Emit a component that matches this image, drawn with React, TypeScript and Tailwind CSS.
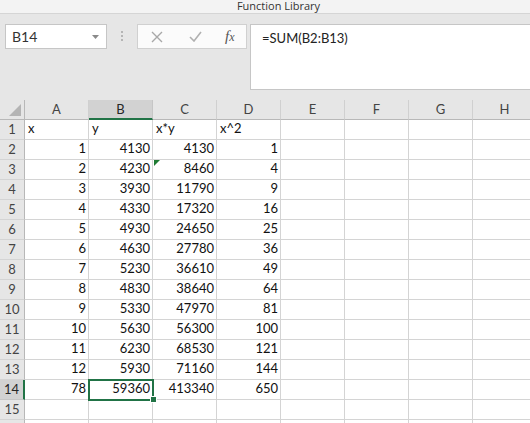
import React from 'react';

const cols = ['A', 'B', 'C', 'D', 'E', 'F', 'G', 'H'];

const rows: (string | number)[][] = [
  ['x', 'y', 'x*y', 'x^2'],
  [1, 4130, 4130, 1],
  [2, 4230, 8460, 4],
  [3, 3930, 11790, 9],
  [4, 4330, 17320, 16],
  [5, 4930, 24650, 25],
  [6, 4630, 27780, 36],
  [7, 5230, 36610, 49],
  [8, 4830, 38640, 64],
  [9, 5330, 47970, 81],
  [10, 5630, 56300, 100],
  [11, 6230, 68530, 121],
  [12, 5930, 71160, 144],
  [78, 59360, 413340, 650],
  [],
  [],
];

function FormulaBar() {
  return (
    <div className="flex h-[86px] items-start pt-[10px]">
      {/* name box */}
      <div className="ml-[5px] flex h-[25px] w-[102px] items-center justify-between border border-[#c6c6c6] bg-white pl-[6px] pr-[7px] text-[14px] text-[#333]">
        <span>B14</span>
        <svg width="7" height="4" viewBox="0 0 7 4">
          <polygon points="0,0 7,0 3.5,4" fill="#8a8a8a" />
        </svg>
      </div>
      <div className="flex w-[30px] flex-col items-center gap-[2px] pt-[7px]">
        <span className="h-[2px] w-[2px] bg-[#b5b5b5]" />
        <span className="h-[2px] w-[2px] bg-[#b5b5b5]" />
        <span className="h-[2px] w-[2px] bg-[#b5b5b5]" />
      </div>
      {/* cancel / enter / fx */}
      <div className="flex h-[25px] w-[110px] items-center border border-[#d0d0d0] bg-[#fbfbfb]">
        <svg className="ml-[13px]" width="12" height="12" viewBox="0 0 12 12">
          <path d="M1 1 L11 11 M11 1 L1 11" stroke="#a8a8a8" strokeWidth="1.4" />
        </svg>
        <svg className="ml-[26px]" width="13" height="11" viewBox="0 0 13 11">
          <path d="M1 6 L5 10 L12 1" stroke="#b0b0b0" strokeWidth="1.6" fill="none" />
        </svg>
        <span className="ml-[23px] font-['Liberation_Serif',serif] text-[15px] italic text-[#555]">
          f<span className="text-[12px]">x</span>
        </span>
      </div>
      {/* formula input */}
      <div className="ml-[3px] h-[66px] flex-1 border border-r-0 border-[#c6c6c6] bg-white pl-[11px] pt-[4px] text-[13px] text-[#222]">
        =SUM(B2:B13)
      </div>
    </div>
  );
}

function Sheet() {
  return (
    <div className="relative">
      <div className="grid grid-cols-[25px_repeat(8,64px)] grid-rows-[20px]">
        {/* corner */}
        <div className="relative border-b border-r border-[#b8b8b8] bg-[#e6e6e6]">
          <svg className="absolute bottom-[3px] right-[3px]" width="12" height="12" viewBox="0 0 12 12">
            <polygon points="12,0 12,12 0,12" fill="#b4b4b4" />
          </svg>
        </div>
        {cols.map((c) => (
          <div
            key={c}
            className={
              c === 'B'
                ? 'flex items-center justify-center border-b-2 border-r border-b-[#217346] border-r-[#c6c6c6] bg-[#d2d2d2] pt-[2px] text-[#262626]'
                : 'flex items-center justify-center border-b border-r border-b-[#b8b8b8] border-r-[#d0d0d0] bg-[#e6e6e6] pt-[1px] text-[#444]'
            }
          >
            {c}
          </div>
        ))}
        {rows.map((r, i) => {
          const n = i + 1;
          return (
            <React.Fragment key={n}>
              <div
                className={
                  n === 14
                    ? 'flex h-[20px] items-center justify-center border-b border-r-2 border-b-[#c6c6c6] border-r-[#217346] bg-[#d2d2d2] text-[#262626]'
                    : 'flex h-[20px] items-center justify-center border-b border-r border-b-[#d4d4d4] border-r-[#b8b8b8] bg-[#e6e6e6] text-[#444]'
                }
              >
                {n < 16 ? n : ''}
              </div>
              {cols.map((c, j) => {
                const v = r[j];
                const isNum = typeof v === 'number';
                return (
                  <div
                    key={c}
                    className={
                      isNum
                        ? 'flex h-[20px] items-end justify-end border-b border-r border-[#d4d4d4] bg-white pb-[1px] pr-[2px] text-[#111]'
                        : 'flex h-[20px] items-end justify-start border-b border-r border-[#d4d4d4] bg-white pb-[1px] pl-[3px] text-[#111]'
                    }
                  >
                    {v ?? ''}
                  </div>
                );
              })}
            </React.Fragment>
          );
        })}
      </div>
      {/* error indicator on C3 */}
      <svg className="absolute left-[154px] top-[60px]" width="6" height="6" viewBox="0 0 6 6">
        <polygon points="0,0 6,0 0,6" fill="#1e7b34" />
      </svg>
      {/* active cell B14 */}
      <div className="absolute left-[88px] top-[279px] h-[22px] w-[66px] border-2 border-[#217346]" />
      <div className="absolute left-[150px] top-[296px] h-[7px] w-[7px] border border-white bg-[#217346]" />
    </div>
  );
}

export default function App() {
  return (
    <div className="h-[423px] w-[530px] overflow-hidden bg-[#e6e6e6] font-['Lato',sans-serif] text-[13px]">
      <div className="flex h-[14px] items-end justify-center border-b border-[#d5d5d5] bg-[#f3f3f3] pb-[1px] pl-[27px] font-['Open_Sans',sans-serif] text-[11px] leading-[13px] text-[#333]">
        Function Library
      </div>
      <FormulaBar />
      <Sheet />
    </div>
  );
}
